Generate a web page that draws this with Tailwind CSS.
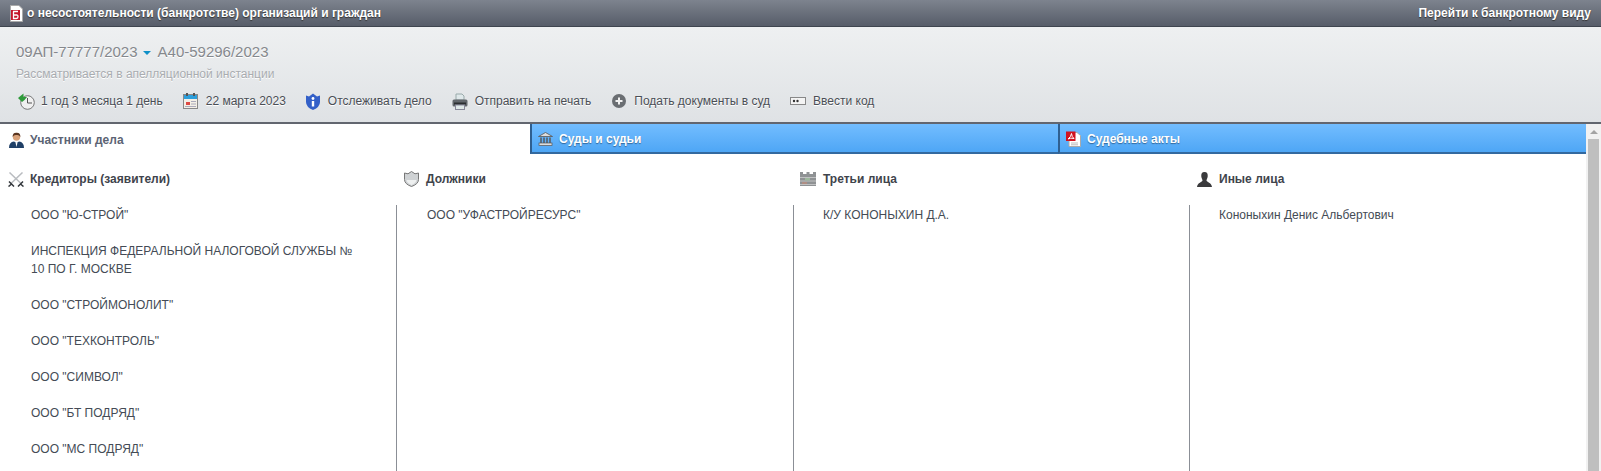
<!DOCTYPE html>
<html><head><meta charset="utf-8"><script src="https://cdn.jsdelivr.net/npm/@tailwindcss/browser@4"></script></head>
<body class="h-[471px] overflow-hidden bg-white font-['Liberation_Sans',Arial,sans-serif] text-[12px] text-[#444b55]">
<div class="flex h-[27px] items-center justify-between border-b border-[#3f454f] bg-gradient-to-b from-[#7d838e] to-[#575d69] pl-[10px] pr-[10px] text-[12px] font-bold text-white [text-shadow:0_1px_1px_#333]">
 <div class="flex items-center gap-[4px]">
  <svg width="13" height="17" viewBox="0 0 13 17"><path d="M0.500 0.500H9L12.500 4V16.500H0.500Z" fill="#fff" stroke="#aaa"/><rect x="1" y="5" width="9" height="10" fill="#c5162a"/><path d="M3 6.500H8M3.500 6.500V13.500H6.500Q8 13.500 8 11.700T6.500 10H3.500" fill="none" stroke="#fff" stroke-width="1.300"/></svg>
  <span>о несостоятельности (банкротстве) организаций и граждан</span>
 </div>
 <span>Перейти к банкротному виду</span>
</div>
<div class="h-[97px] border-b-2 border-[#62666f] bg-gradient-to-b from-[#eef0f1] to-[#dfe2e5] pl-[16px] pt-[16px]">
 <div class="flex h-[18px] items-center text-[15px] text-[#85888d] [text-shadow:0_1px_0_#fff]">
  <span>09АП-77777/2023</span>
  <span class="ml-[5px] mt-[2px] h-0 w-0 border-x-[4px] border-t-[4px] border-x-transparent border-t-[#0f90c8]"></span>
  <span class="ml-[7px]">А40-59296/2023</span>
 </div>
 <div class="mt-[6px] h-[14px] leading-[14px] text-[#a9acb0] [text-shadow:0_1px_0_#fff]">Рассматривается в апелляционной инстанции</div>
 <div class="mt-[9px] flex h-[22px] items-center text-[#4a4e55] [text-shadow:0_1px_0_#fff]">
  <div class="ml-[2px] flex items-center gap-[6px]"><svg width="17" height="17" viewBox="0 0 17 17"><circle cx="9.500" cy="9.500" r="6.800" fill="#f0f0f0" stroke="#777"/><path d="M9.500 5V10H14" fill="none" stroke="#555"/><path d="M5.500 0.500V4H9L6.500 7L4 9L0 5L3 2.500Z" fill="#2e9a3a"/></svg><span>1 год 3 месяца 1 день</span></div>
  <div class="ml-[20px] flex items-center gap-[8px]"><svg width="15" height="16" viewBox="0 0 15 16"><rect x="0.500" y="1.500" width="14" height="14" fill="#f3efe6" stroke="#888"/><rect x="1" y="2" width="13" height="4" fill="#2c9fdc"/><rect x="3" y="0" width="2" height="3" fill="#555"/><rect x="10" y="0" width="2" height="3" fill="#555"/><rect x="3" y="9" width="4" height="3" fill="#dc4a44"/><path d="M8 8.500H13M8 11H13M2 13.500H13" stroke="#aab"/></svg><span>22 марта 2023</span></div>
  <div class="ml-[20px] flex items-center gap-[8px]"><svg width="14" height="17" viewBox="0 0 14 17"><path d="M0 2.500L3 3.500L7 0.500L11 3.500L14 2.500V9Q14 14 7 17Q0 14 0 9Z" fill="#3360c8"/><circle cx="7" cy="5.500" r="1.400" fill="#fff"/><rect x="5.800" y="8" width="2.400" height="5.500" fill="#fff"/></svg><span>Отслеживать дело</span></div>
  <div class="ml-[20px] flex items-center gap-[7px]"><svg width="16" height="17" viewBox="0 0 16 17"><path d="M4 1H10L12 3V7H4Z" fill="#dfe8ea" stroke="#9aa"/><rect x="0.500" y="6.500" width="15" height="7" rx="1.500" fill="#62676c"/><rect x="2" y="9.500" width="12" height="2" fill="#2b2e31"/><rect x="3.500" y="12" width="9" height="4.500" fill="#dfe8e8" stroke="#889"/></svg><span>Отправить на печать</span></div>
  <div class="ml-[21px] flex items-center gap-[8px]"><svg width="14" height="14" viewBox="0 0 14 14"><circle cx="7" cy="7" r="7" fill="#6a6e72"/><path d="M7 3.500V10.500M3.500 7H10.500" stroke="#f2f2f2" stroke-width="2"/></svg><span>Подать документы в суд</span></div>
  <div class="ml-[20px] flex items-center gap-[7px]"><svg width="16" height="8" viewBox="0 0 16 8"><rect x="0.500" y="0.500" width="15" height="7" fill="#f4f4f4" stroke="#888"/><circle cx="4" cy="4" r="1.200" fill="#333"/><circle cx="7.500" cy="4" r="1.200" fill="#333"/></svg><span>Ввести код</span></div>
 </div>
</div>
<div class="flex h-[347px] overflow-hidden">
 <div class="min-w-0 flex-1">
  <div class="flex h-[30px] font-bold">
   <div class="flex w-[530px] items-center gap-[6px] bg-white pt-[2px] pl-[9px] text-[#5c6474]"><svg width="15" height="16" viewBox="0 0 15 16"><path d="M0 16Q0 10 5 9.500L7.500 11L10 9.500Q15 10 15 16Z" fill="#1f3f66"/><path d="M6.500 10.500L7.500 15L8.500 10.500Z" fill="#fff"/><circle cx="7.500" cy="5" r="3.700" fill="#d9a27a"/><path d="M3.600 5Q3.500 0.500 7.500 0.700Q11.500 0.500 11.400 5Q10 2.500 7.500 3Q5 2.500 3.600 5Z" fill="#5a3520"/></svg><span>Участники дела</span></div>
   <div class="flex w-[528px] items-center gap-[6px] border-b-2 border-l-2 border-b-[#33699f] border-l-[#2f5f90] bg-gradient-to-b from-[#72bdff] to-[#4ea6f5] pl-[6px] pt-[2px] text-white [text-shadow:0_1px_1px_#33689c]"><svg width="15" height="14" viewBox="0 0 15 14"><path d="M7.500 0.500L14.500 4.500H0.500Z" fill="#ddd" stroke="#555" stroke-width="0.800"/><path d="M3 5.500V11M6 5.500V11M9 5.500V11M12 5.500V11" stroke="#555" stroke-width="1.400"/><rect x="1" y="11" width="13" height="2.500" fill="#ddd" stroke="#555" stroke-width="0.700"/></svg><span>Суды и судьи</span></div>
   <div class="flex flex-1 items-center gap-[6px] border-b-2 border-l-2 border-b-[#33699f] border-l-[#2f5f90] bg-gradient-to-b from-[#72bdff] to-[#4ea6f5] pl-[6px] pt-[2px] text-white [text-shadow:0_1px_1px_#33689c]"><svg width="15" height="16" viewBox="0 0 15 16"><path d="M3 1.500H11L14.500 4.500V15.500H3Z" fill="#fff" stroke="#aaa"/><rect x="0" y="0.500" width="9.500" height="9.500" fill="#d2131f"/><path d="M2 8Q5 6 5.500 2.500Q5.800 6 8 7.500Q4.500 6.500 2 8Z" fill="none" stroke="#fff"/><path d="M5 12H12M5 13.800H12" stroke="#bbb"/></svg><span>Судебные акты</span></div>
  </div>
  <div class="grid grid-cols-[396px_397px_396px_397px]">
   <div>
    <div class="flex h-[51px] items-center gap-[6px] pb-[1px] pl-[8px] font-bold text-[#3f444c]"><svg width="16" height="15" viewBox="0 0 16 15"><path d="M14.500 0.500L3 11.500M1.500 0.500L13 11.500" stroke="#b9bcc0" stroke-width="1.500"/><path d="M1 9.500L6 14.500M15 9.500L10 14.500M0.500 14.500L3.500 12M15.500 14.500L12.500 12" stroke="#33373c" stroke-width="1.500"/></svg><span>Кредиторы (заявители)</span></div>
    <div class="h-[266px] pl-[31px] pr-[40px] pt-[1px] leading-[18px]">
     <div class="pb-[18px]">ООО "Ю-СТРОЙ"</div>
     <div class="pb-[18px]">ИНСПЕКЦИЯ ФЕДЕРАЛЬНОЙ НАЛОГОВОЙ СЛУЖБЫ № 10 ПО Г. МОСКВЕ</div>
     <div class="pb-[18px]">ООО "СТРОЙМОНОЛИТ"</div>
     <div class="pb-[18px]">ООО "ТЕХКОНТРОЛЬ"</div>
     <div class="pb-[18px]">ООО "СИМВОЛ"</div>
     <div class="pb-[18px]">ООО "БТ ПОДРЯД"</div>
     <div>ООО "МС ПОДРЯД"</div>
    </div>
   </div>
   <div>
    <div class="flex h-[51px] items-center gap-[7px] pb-[1px] pl-[8px] font-bold text-[#3f444c]"><svg width="15" height="16" viewBox="0 0 15 16"><path d="M0.500 2L4 2.800L7.500 0.500L11 2.800L14.500 2V8.500Q14.500 13 7.500 15.500Q0.500 13 0.500 8.500Z" fill="#cfd2d4" stroke="#777"/><path d="M2.500 9H12.500Q12 12 7.500 14Q3 12 2.500 9Z" fill="#eef0f0"/></svg><span>Должники</span></div>
    <div class="h-[266px] border-l border-[#8b8f96] pl-[30px] pr-[40px] pt-[1px] leading-[18px]"><div>ООО "УФАСТРОЙРЕСУРС"</div></div>
   </div>
   <div>
    <div class="flex h-[51px] items-center gap-[7px] pb-[1px] pl-[7px] font-bold text-[#3f444c]"><svg width="16" height="14" viewBox="0 0 16 14"><path d="M0 0H3V2H6.500V0H9.500V2H13V0H16V14H0Z" fill="#8f9294"/><path d="M0 5.500H16M0 9H16M0 12.500H16" stroke="#d6d6d6" stroke-width="0.700"/><rect x="5" y="6" width="5" height="2.500" fill="#9db89c"/><rect x="2" y="10" width="5" height="2" fill="#b08e84"/></svg><span>Третьи лица</span></div>
    <div class="h-[266px] border-l border-[#8b8f96] pl-[29px] pr-[40px] pt-[1px] leading-[18px]"><div>К/У КОНОНЫХИН Д.А.</div></div>
   </div>
   <div>
    <div class="flex h-[51px] items-center gap-[7px] pb-[1px] pl-[8px] font-bold text-[#3f444c]"><svg width="15" height="15" viewBox="0 0 15 15"><path d="M7.500 0C4.800 0 4 2 4.300 4.500C4.500 6.300 5.500 7.500 5.500 8.500C5.500 10 0.500 10.500 0 15H15C14.500 10.500 9.500 10 9.500 8.500C9.500 7.500 10.500 6.300 10.700 4.500C11 2 10.200 0 7.500 0Z" fill="#3a3a3c"/></svg><span>Иные лица</span></div>
    <div class="h-[266px] border-l border-[#8b8f96] pl-[29px] pr-[40px] pt-[1px] leading-[18px]"><div>Кононыхин Денис Альбертович</div></div>
   </div>
  </div>
 </div>
 <div class="flex w-[15px] shrink-0 flex-col items-center bg-[#f1f1f1]">
  <span class="mt-[6px] h-0 w-0 border-x-[4px] border-b-[4px] border-x-transparent border-b-[#a3a3a3]"></span>
  <span class="mt-[5px] h-[332px] w-[11px] bg-[#bfbfbf]"></span>
 </div>
</div>
</body></html>
